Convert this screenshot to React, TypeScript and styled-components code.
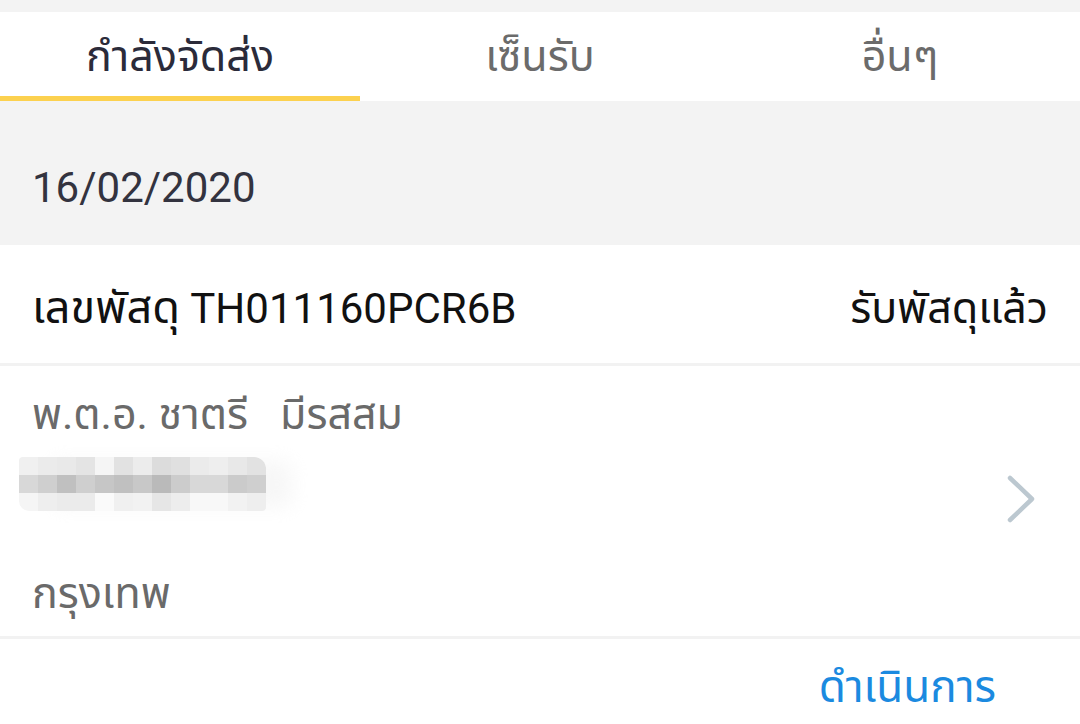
import React from 'react';
import styled, { createGlobalStyle } from 'styled-components';

const GlobalStyle = createGlobalStyle`
  html, body {
    margin: 0;
    padding: 0;
    background: #ffffff;
  }
  body {
    font-family: Roboto, "Noto Sans Thai", "Noto Sans", "DejaVu Sans", sans-serif;
    -webkit-font-smoothing: antialiased;
  }
`;

const Page = styled.div`
  width: 1080px;
  height: 724px;
  overflow: hidden;
  background: #f3f3f3;
  padding-top: 12px;
  box-sizing: border-box;
`;

const TabBar = styled.div`
  display: flex;
  height: 89px;
  background: #ffffff;
`;

const Tab = styled.div<{ active?: boolean }>`
  flex: 1;
  display: flex;
  align-items: center;
  justify-content: center;
  box-sizing: border-box;
  padding-top: 4px;
  border-bottom: 5px solid ${p => (p.active ? '#fcd14f' : 'transparent')};
  font-size: 43px;
  line-height: 42px;
  color: ${p => (p.active ? '#2b2b3a' : '#6b6b6b')};
`;

const DateBar = styled.div`
  height: 144px;
  box-sizing: border-box;
  padding: 66px 32px 0;
  font-size: 42px;
  line-height: 42px;
  color: #33333f;
`;

const Card = styled.div`
  background: #ffffff;
`;

const TitleRow = styled.div`
  display: flex;
  justify-content: space-between;
  height: 118px;
  box-sizing: border-box;
  padding: 42px 32px 0;
  font-size: 42px;
  line-height: 42px;
  color: #111111;
`;

const Thai = styled.span<{ size?: number }>`
  font-size: ${p => p.size ?? 45}px;
`;

const Divider = styled.div`
  height: 3px;
  background: #f2f2f2;
`;

const Body = styled.div`
  display: flex;
  align-items: center;
  height: 270px;
  padding-right: 44px;
`;

const Info = styled.div`
  flex: 1;
  align-self: flex-start;
  display: flex;
  flex-direction: column;
  padding-top: 27px;
`;

const Line = styled.div`
  padding-left: 32px;
  font-size: 43px;
  line-height: 42px;
  color: #6a6a6a;
  white-space: pre;
`;

const City = styled(Line)`
  margin-top: 61px;
`;

const Blurred = styled.div`
  display: grid;
  grid-template-columns: repeat(13, 19px);
  grid-auto-rows: 18px;
  width: fit-content;
  margin: 22px 0 0 19px;
  border-radius: 4px 12px 4px 10px;
  overflow: hidden;
  filter: blur(0.6px);
  box-shadow: 30px 0 20px -4px rgba(244, 244, 244, 0.7);
`;

const Cell = styled.div<{ shade: string }>`
  background: ${p => p.shade};
`;

const Chevron = styled.svg`
  width: 30px;
  height: 50px;
  flex-shrink: 0;
  margin-top: -4px;
`;

const Footer = styled.div`
  display: flex;
  justify-content: flex-end;
  height: 85px;
  box-sizing: border-box;
  padding: 27px 84px 0 0;
`;

const ActionLink = styled.div`
  font-size: 44px;
  line-height: 42px;
  color: #1b8ae0;
`;

const blurRows = [
  ['#f0f0f0', '#ebebeb', '#e9e9e9', '#e4e4e4', '#f5f5f5', '#e2e2e2', '#ececec', '#dcdcdc', '#e0e0e0', '#ebebeb', '#eeeeee', '#e8e8e8', '#e2e2e2'],
  ['#d8d8d8', '#cfcfcf', '#c0c0c0', '#cfcfcf', '#c6c6c6', '#c0c0c0', '#c8c8c8', '#bababa', '#cccccc', '#d8d8d8', '#d8d8d8', '#cbcbcb', '#cfcfcf'],
  ['#f5f5f5', '#eeeeee', '#ebebeb', '#ebebeb', '#fafafa', '#f0f0f0', '#f2f2f2', '#e6e6e6', '#ededed', '#f8f8f8', '#f8f8f8', '#f2f2f2', '#eeeeee'],
];

const App: React.FC = () => {
  return (
    <Page>
      <GlobalStyle />
      <TabBar>
        <Tab active>กำลังจัดส่ง</Tab>
        <Tab>เซ็นรับ</Tab>
        <Tab>อื่นๆ</Tab>
      </TabBar>

      <DateBar>16/02/2020</DateBar>

      <Card>
        <TitleRow>
          <span>
            <Thai>เลขพัสดุ</Thai> TH011160PCR6B
          </span>
          <Thai size={43}>รับพัสดุแล้ว</Thai>
        </TitleRow>
        <Divider />
        <Body>
          <Info>
            <Line>{'พ.ต.อ. ชาตรี   มีรสสม'}</Line>
            <Blurred>
              {blurRows.map((row, r) =>
                row.map((shade, c) => <Cell key={`${r}-${c}`} shade={shade} />)
              )}
            </Blurred>
            <City>กรุงเทพ</City>
          </Info>
          <Chevron viewBox="0 0 30 50">
            <polyline
              points="4,4 26,25 4,46"
              fill="none"
              stroke="#bcc8d0"
              strokeWidth="4.5"
              strokeLinecap="round"
              strokeLinejoin="round"
            />
          </Chevron>
        </Body>
        <Divider />
        <Footer>
          <ActionLink>ดำเนินการ</ActionLink>
        </Footer>
      </Card>
    </Page>
  );
};

export default App;
